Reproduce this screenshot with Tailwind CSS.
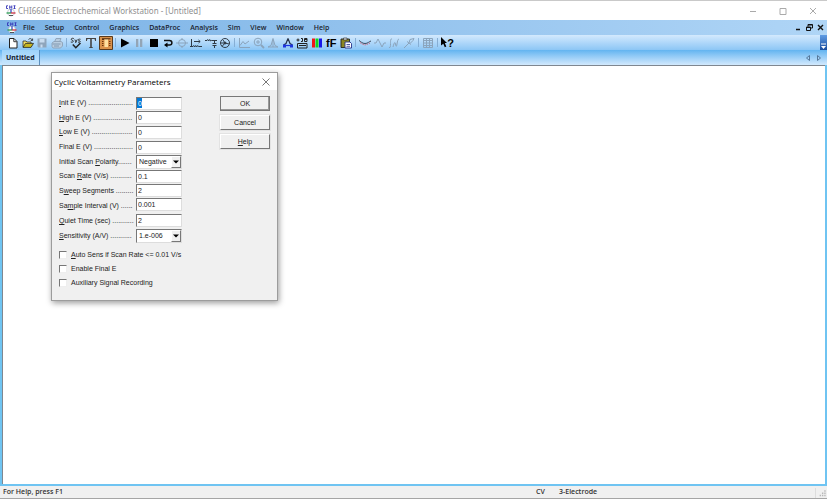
<!DOCTYPE html>
<html lang="en">
<head>
    <meta charset="UTF-8">
    <meta name="viewport" content="width=device-width, initial-scale=1.0">
    <title>CHI660E Electrochemical Workstation - [Untitled]</title>
    <script src="https://cdn.jsdelivr.net/npm/@tailwindcss/browser@4"></script>
</head>
<body class="h-screen flex flex-col overflow-hidden bg-[#f0f0f0] font-['Open_Sans','Noto_Sans',sans-serif] text-[8px] leading-[12px] text-[#1c2430]">

    <!-- Shared logo -->
    <svg class="hidden">
        <symbol id="logo" viewBox="0 0 12 12">
            <path d="M3 .8H1.500V3.500H3M4.700 .5v3.300M6.800 .5v3.300M4.700 2.100h2.100M8.500 .8h2M8.500 3.500h2M9.500 .8v2.700" stroke="#3434b8" stroke-width=".9" fill="none"/>
            <circle cx="6" cy="7.500" r="3.500" fill="#fff" stroke="#aab6c4" stroke-width=".7"/>
            <path d="M6 4v4" stroke="#2a3fc0" stroke-width="1.200"/>
            <path d="M6 8H1.500" stroke="#2a9c50" stroke-width="1.300"/>
            <path d="M6 8h4.500" stroke="#d03040" stroke-width="1.300"/>
            <path d="M4 10.500h4" stroke="#333" stroke-width=".8"/>
        </symbol>
    </svg>

    <!-- Title bar -->
    <header class="h-[20px] shrink-0 flex items-center bg-white border-t border-[#c9c9c9] pl-[5px] pr-[9px]">
        <svg class="size-[12px] shrink-0"><use href="#logo"/></svg>
        <h1 class="ml-[1px] font-['Noto_Sans',sans-serif] text-[8px] text-[#8f8f8f]">CHI660E Electrochemical Workstation - [Untitled]</h1>
        <div class="ml-auto flex gap-[20px]">
            <button aria-label="Minimize"><svg class="size-[10px]" viewBox="0 0 10 10" fill="none" stroke="#aaa"><path d="M2 5.500h6"/></svg></button>
            <button aria-label="Maximize"><svg class="size-[10px]" viewBox="0 0 10 10" fill="none" stroke="#aaa"><path d="M2 2.500h6v6H2z"/></svg></button>
            <button aria-label="Close"><svg class="size-[10px]" viewBox="0 0 10 10" fill="none" stroke="#aaa"><path d="M2 2l6 6M8 2L2 8"/></svg></button>
        </div>
    </header>

    <!-- Menu bar -->
    <nav class="h-[15px] shrink-0 flex items-center pl-[6px] pr-[2px] bg-linear-to-r from-[#7cb3e6] to-[#afd5f6]">
        <svg class="size-[12px] shrink-0 mr-[5px]"><use href="#logo"/></svg>
        <div class="flex gap-[10px] font-semibold text-[7px]">
            <button>File</button>
            <button>Setup</button>
            <button>Control</button>
            <button>Graphics</button>
            <button>DataProc</button>
            <button>Analysis</button>
            <button>Sim</button>
            <button>View</button>
            <button>Window</button>
            <button>Help</button>
        </div>
        <div class="ml-auto flex gap-[2px]">
            <button aria-label="Minimize document"><svg class="size-[9px]" viewBox="0 0 9 9"><path d="M2 6.500h4" stroke="#111" stroke-width="1.500"/></svg></button>
            <button aria-label="Restore document"><svg class="size-[9px]" viewBox="0 0 9 9" fill="none" stroke="#111"><path d="M3 3.500V1.500h4.500v3.500H6M1.500 4h4v3.500h-4zM3 2h4.500M1.500 4.500h4"/></svg></button>
            <button aria-label="Close document"><svg class="size-[9px]" viewBox="0 0 9 9" stroke="#111" stroke-width="1.400"><path d="M2 2l5 5M7 2L2 7"/></svg></button>
        </div>
    </nav>

    <!-- Toolbar -->
    <div class="h-[15px] shrink-0 flex items-stretch pl-[6px] bg-linear-to-b from-[#d3e9fd] to-[#8cc6f5]">
        <div class="grid grid-cols-4 w-[58px] place-items-center">
            <button aria-label="New"><svg class="size-[12px]" viewBox="0 0 12 12"><path d="M2.500 1.500h4.500l3 3v6.500H2.500z" fill="#fff" stroke="#222"/><path d="M6.800 1.500v3.200h3" fill="none" stroke="#222" stroke-width=".9"/></svg></button>
            <button aria-label="Open"><svg class="size-[12px]" viewBox="0 0 12 12"><path d="M1 10V4h3l1 1h4v1.500" fill="#f4e060" stroke="#333" stroke-width=".8"/><path d="M1 10.400l2.500-4h8L9 10.400z" fill="#c8b820" stroke="#222" stroke-width=".8"/><path d="M6.500 2.500c1.500-1.500 3-1 3.800.5M10.600 1.500v2H8.800" fill="none" stroke="#222" stroke-width=".8"/></svg></button>
            <button aria-label="Save"><svg class="size-[12px]" viewBox="0 0 12 12"><path d="M1.500 1.500h9v9h-8l-1-1z" fill="#8fa5bb"/><path d="M3.500 2h5v3.500h-5zM4.500 7.500h2v3h-2z" fill="#c9dcef"/></svg></button>
            <button aria-label="Print"><svg class="size-[12px]" viewBox="0 0 12 12"><path d="M3.500 5l1.500-3.500h5L8.500 5M1 6l2-1.500h7l1.500 1v3.500l-2 2H2L1 9.500z" fill="#b9cde0" stroke="#8da2b7" stroke-width=".9"/><path d="M1.500 7h8M3 9h5" stroke="#8098b0" fill="none"/></svg></button>
        </div>
        <div class="w-[5px] flex justify-center py-[3px]"><i class="w-px bg-[#86aed4]"></i></div>
        <div class="grid grid-cols-3 w-[44px] place-items-center">
            <button aria-label="System"><svg class="size-[12px]" viewBox="0 0 12 12" fill="none" stroke="#222" stroke-width=".9"><path d="M3.800 1.500C1 .5.500 3 2.300 3.300S3.500 5.800.8 5M4.800 2.500l1.200 2.500M7.200 2.500L5.500 6M10.500 2.300C8 1.600 7.500 3.300 9.300 3.700s1 2-1.300 1.400"/><path d="M2.800 7.500l3 3.200L10.500 6" stroke-width="1.500"/></svg></button>
            <button aria-label="Technique"><svg class="size-[12px]" viewBox="0 0 12 12" fill="#444"><path d="M1 1h10v3h-.8L9.500 2H6.800v8l1.200.4V11H4v-.6L5.200 10V2H2.500l-.7 2H1z"/></svg></button>
            <button aria-label="Parameters"><svg class="size-[14px]" viewBox="0 0 14 14"><path d="M.5 .5h13v13H.5z" fill="#d9914a" stroke="#5a3a1c"/><path d="M3 3.500h2M3 5.500h1.500M3 7.500h1.500M3 9.500h1.500M10 5.500h1.500M10 7.500h1.500M10 9.500h1.500" stroke="#6b350c"/><path d="M5.500 3h3.500v8H5.500z" fill="#ffe0a0"/><path d="M3 2.800h8.500" stroke="#4a270c"/></svg></button>
        </div>
        <div class="w-[5px] flex justify-center py-[3px]"><i class="w-px bg-[#86aed4]"></i></div>
        <div class="grid grid-cols-8 w-[114px] place-items-center">
            <button aria-label="Run"><svg class="size-[12px]" viewBox="0 0 12 12"><path d="M2 1.500l8.500 4.500L2 10.500z"/></svg></button>
            <button aria-label="Pause"><svg class="size-[12px]" viewBox="0 0 12 12" fill="#93a5b6"><path d="M3 2h2.300v8H3zM7 2h2.300v8H7z"/></svg></button>
            <button aria-label="Stop"><svg class="size-[12px]" viewBox="0 0 12 12"><path d="M2 2h8v8H2z"/></svg></button>
            <button aria-label="Reverse"><svg class="size-[12px]" viewBox="0 0 12 12"><path d="M2 3.500h5.500c3.200 0 3.200 4.500 0 4.500H5" fill="none" stroke="#111" stroke-width="1.500"/><path d="M2 8l3.500-2.500v5z"/></svg></button>
            <button aria-label="Zero current"><svg class="size-[12px]" viewBox="0 0 12 12" fill="none" stroke="#8ba4bc"><circle cx="6" cy="6" r="3.500"/><path d="M0 6h12M6 1v2M6 9v2"/></svg></button>
            <button aria-label="iR compensation"><svg class="size-[12px]" viewBox="0 0 12 12" fill="none" stroke="#2f3a46"><path d="M1.500 2v7M0 9.500h3l.7-1 1 1.500 1-1.500 1 1.500 1-1.500.8 1H12M4 4.500h6M8.500 3l1.700 1.500L8.500 6"/></svg></button>
            <button aria-label="Filter"><svg class="size-[12px]" viewBox="0 0 12 12" fill="none" stroke="#2f3a46"><path d="M0 3.500h2l.7-1 1 1.500 1-1.500 1 1.500.7-.5H12M9.500 3.500v3M7.500 6.500h4M7.500 8.500h4M9.500 8.500v2.500"/></svg></button>
            <button aria-label="Cell"><svg class="size-[12px]" viewBox="0 0 12 12" fill="none" stroke="#2f3a46"><circle cx="6" cy="6" r="4.500"/><path d="M6 6L4 3M6 6l4 1M6 6L3 9.500M1.500 6H5"/><circle cx="6" cy="6" r="1" fill="#2f3a46"/></svg></button>
        </div>
        <div class="w-[5px] flex justify-center py-[3px]"><i class="w-px bg-[#86aed4]"></i></div>
        <div class="grid grid-cols-8 w-[116px] place-items-center">
            <button aria-label="Present data"><svg class="size-[12px]" viewBox="0 0 12 12" fill="none" stroke="#8ba4bc"><path d="M1.500 1v9.500H12M2 8.500l3-4 2 2.500 4-3"/></svg></button>
            <button aria-label="Zoom"><svg class="size-[12px]" viewBox="0 0 12 12" fill="none" stroke="#8ba4bc"><circle cx="5" cy="5" r="3.800"/><path d="M3 5h4M5 3v4"/><path d="M8 8l3 3" stroke-width="1.800"/></svg></button>
            <button aria-label="Peak"><svg class="size-[12px]" viewBox="0 0 12 12" fill="none" stroke="#8ba4bc"><path d="M1 10l3-1.500L6 1.500l2 7L11 10M1 10h10M6 3v7"/></svg></button>
            <button aria-label="Peak definition"><svg class="size-[12px]" viewBox="0 0 12 12" fill="none" stroke="#1d35e0"><path d="M6 1.500L4 6.500 1.500 8M6 1.500L8 6.500l2.500 1.500" stroke="#26324a" stroke-width="1.200"/><path d="M3 8.500h6" stroke-width="1.200"/><path d="M1 7.500h3v3H1zM8 7.500h3v3H8z" fill="#1d35e0" stroke="none"/></svg></button>
            <button aria-label="Axis options"><svg class="size-[12px]" viewBox="0 0 12 12" fill="none" stroke="#222"><path d="M.5 3h3M2 1.500v3M5 1.500h1.500v3H5M8.500 1.500h2.500v3H8.500zM1.500 6.500h9.500V11H1.500zM3 8.500h7M8 2.500h3"/></svg></button>
            <button aria-label="Colors"><svg class="size-[12px]" viewBox="0 0 12 12"><path d="M1 1.500h3v9H1z" fill="#f01818"/><path d="M4.500 1.500h3v9h-3z" fill="#10d820"/><path d="M8 1.500h3v9H8z" fill="#1818e8"/></svg></button>
            <button aria-label="Font" class="font-['Liberation_Sans',sans-serif] font-bold text-[11px] text-black">fF</button>
            <button aria-label="Clipboard"><svg class="size-[12px]" viewBox="0 0 12 12"><path d="M1 2h8.500v8.500H1z" fill="#8c8620" stroke="#222" stroke-width=".9"/><path d="M3.500 1h3.500v2H3.500z" fill="#ddd" stroke="#222" stroke-width=".6"/><path d="M5 5h5l1.500 1.500V11H5z" fill="#fff" stroke="#26328a" stroke-width=".9"/><path d="M6.500 7.500h3.500M6.500 9.300h3.500" stroke="#26328a" stroke-width=".8"/></svg></button>
        </div>
        <div class="w-[5px] flex justify-center py-[3px]"><i class="w-px bg-[#86aed4]"></i></div>
        <div class="grid grid-cols-4 w-[58px] place-items-center">
            <button aria-label="Smoothing"><svg class="size-[12px]" viewBox="0 0 12 12" fill="none"><path d="M0 3.500c2 1 3 3 6 3s4-2 6-2.500" stroke="#3c4c60"/><path d="M1 5.500l2 1.500 3 1 3-1 2-1" stroke="#d05068" stroke-dasharray="1 1"/></svg></button>
            <button aria-label="Derivative"><svg class="size-[12px]" viewBox="0 0 12 12" fill="none" stroke="#8ba4bc"><path d="M0 6h2L4 2l4 8 2-4h2"/></svg></button>
            <button aria-label="Integration"><svg class="size-[12px]" viewBox="0 0 12 12" fill="none" stroke="#8ba4bc"><path d="M1 10.500c1.500.5 1.500-1 1.500-4s0-5 1.500-4.500M5 10c1-4 2-6 2.500-3s1 3 1.500 0 1-5 2-5"/></svg></button>
            <button aria-label="Interpolation"><svg class="size-[12px]" viewBox="0 0 12 12" fill="none" stroke="#8ba4bc"><path d="M1 11l5-5 1-3.500 4-1-1 2-3 3M4 4.500l4 3"/></svg></button>
        </div>
        <div class="w-[5px] flex justify-center py-[3px]"><i class="w-px bg-[#86aed4]"></i></div>
        <div class="grid w-[14px] place-items-center">
            <button aria-label="Data list"><svg class="size-[12px]" viewBox="0 0 12 12" fill="none" stroke="#8ba4bc"><path d="M1.500 1.500h9v9h-9zM1.500 3.500h9M1.500 6h9M1.500 8.500h9M4.500 1.500v9M7.500 1.500v9"/></svg></button>
        </div>
        <div class="w-[5px] flex justify-center py-[3px]"><i class="w-px bg-[#86aed4]"></i></div>
        <div class="grid w-[15px] place-items-center">
            <button aria-label="Context help" class="flex items-center font-['Liberation_Sans',sans-serif] font-bold text-[11px] text-black">
                <svg class="w-[6px] h-[11px]" viewBox="0 0 6 11"><path d="M0 0l6 6H3.800l1.500 3.500-1.500.7L2.300 6.800 0 8.500z"/></svg>?
            </button>
        </div>
        <button aria-label="Toolbar options" class="ml-auto w-[7px] flex items-end justify-center bg-linear-to-b from-[#5f9ce4] to-[#1a4c9e]">
            <svg class="w-[5px] h-[7px]" viewBox="0 0 5 7"><path d="M0 1h5" stroke="#fff"/><path d="M0 3h5L2.500 6z" fill="#fff"/></svg>
        </button>
    </div>

    <!-- Document tabs -->
    <div class="h-[15px] shrink-0 flex items-stretch justify-between pl-[2px] pr-[4px] bg-linear-to-b from-[#62b4f0] to-[#d2e9fd]">
        <button class="h-full px-[4px] border-r border-[#5b8fbe] bg-linear-to-b from-[#9dd3fa] to-[#c9e6fd] font-['Noto_Sans',sans-serif] font-bold text-[7px] text-[#14202e]">Untitled</button>
        <div class="flex items-center gap-[3px]">
            <button aria-label="Previous tab"><svg class="size-[8px]" viewBox="0 0 8 8" fill="none" stroke="#56789a"><path d="M5.500 1.500v5L2.500 4z"/></svg></button>
            <button aria-label="Next tab"><svg class="size-[8px]" viewBox="0 0 8 8" fill="none" stroke="#56789a"><path d="M2.500 1.500v5l3-2.500z"/></svg></button>
        </div>
    </div>

    <!-- Document area -->
    <main class="relative flex-1 min-h-0 border-x-2 border-b-2 border-[#6fc4f2] bg-white">
        <div class="h-full border-t border-l border-[#7f8790]"></div>

        <form class="absolute left-[49px] top-[7px] w-[227px] border border-[#9c9c9c] bg-[#f0f0f0] shadow-[1px_2px_6px_rgba(0,0,0,0.4)] font-['Liberation_Sans',sans-serif] text-[7px] leading-[10px] text-[#222]">
            <div class="h-[17px] flex items-center justify-between pl-[2px] pr-[6px] bg-white">
                <h2 class="font-['Open_Sans','Noto_Sans',sans-serif] text-[8px] text-black">Cyclic Voltammetry Parameters</h2>
                <button type="button" aria-label="Close dialog"><svg class="size-[10px]" viewBox="0 0 10 10" stroke="#555" stroke-width=".8"><path d="M1.500 1.500l7 7M8.500 1.500l-7 7"/></svg></button>
            </div>

            <div class="flex justify-between pl-[7px] pr-[7px] pt-[6px]">
                <div class="w-[123px]">
                    <div class="h-[102px] flex flex-col">
                        <div class="flex-1 flex items-center">
                            <label for="init" class="w-[77px] overflow-hidden whitespace-nowrap"><u>I</u>nit E (V) .......................</label>
                            <input id="init" value="0" class="w-[46px] h-[13px] px-px border border-t-[#777] border-l-[#777] border-b-[#ddd] border-r-[#ddd] bg-white bg-[linear-gradient(#0078d7,#0078d7)] bg-no-repeat bg-[length:5px_10px] text-white">
                        </div>
                        <div class="flex-1 flex items-center">
                            <label for="high" class="w-[77px] overflow-hidden whitespace-nowrap"><u>H</u>igh E (V) ....................</label>
                            <input id="high" value="0" class="w-[46px] h-[13px] px-px border border-t-[#777] border-l-[#777] border-b-[#ddd] border-r-[#ddd] bg-white">
                        </div>
                        <div class="flex-1 flex items-center">
                            <label for="low" class="w-[77px] overflow-hidden whitespace-nowrap"><u>L</u>ow E (V) .....................</label>
                            <input id="low" value="0" class="w-[46px] h-[13px] px-px border border-t-[#777] border-l-[#777] border-b-[#ddd] border-r-[#ddd] bg-white">
                        </div>
                        <div class="flex-1 flex items-center">
                            <label for="final" class="w-[77px] overflow-hidden whitespace-nowrap">Final E (V) ....................</label>
                            <input id="final" value="0" class="w-[46px] h-[13px] px-px border border-t-[#777] border-l-[#777] border-b-[#ddd] border-r-[#ddd] bg-white">
                        </div>
                        <div class="flex-1 flex items-center">
                            <label for="polarity" class="w-[77px] overflow-hidden whitespace-nowrap">Initial Scan <u>P</u>olarity.......</label>
                            <div class="relative w-[46px] h-[14px]">
                                <select id="polarity" class="block appearance-none w-full h-full pl-[2px] border border-t-[#777] border-l-[#777] border-b-[#ddd] border-r-[#ddd] bg-white"><option>Negative</option><option>Positive</option></select>
                                <svg class="absolute right-[1px] top-[1px] w-[10px] h-[12px] bg-[#f0f0f0] border border-[#fff] border-r-[#777] border-b-[#777] pointer-events-none" viewBox="0 0 8 10"><path d="M1 3.500h6L4 6.500z"/></svg>
                            </div>
                        </div>
                        <div class="flex-1 flex items-center">
                            <label for="rate" class="w-[77px] overflow-hidden whitespace-nowrap">Scan <u>R</u>ate (V/s) ...........</label>
                            <input id="rate" value="0.1" class="w-[46px] h-[13px] px-px border border-t-[#777] border-l-[#777] border-b-[#ddd] border-r-[#ddd] bg-white">
                        </div>
                        <div class="flex-1 flex items-center">
                            <label for="sweep" class="w-[77px] overflow-hidden whitespace-nowrap">S<u>w</u>eep Segments .........</label>
                            <input id="sweep" value="2" class="w-[46px] h-[13px] px-px border border-t-[#777] border-l-[#777] border-b-[#ddd] border-r-[#ddd] bg-white">
                        </div>
                    </div>
                    <div class="h-[46px] flex flex-col">
                        <div class="flex-1 flex items-start">
                            <label for="interval" class="w-[77px] pt-[3px] overflow-hidden whitespace-nowrap">Sa<u>m</u>ple Interval (V) ......</label>
                            <input id="interval" value="0.001" class="w-[46px] h-[13px] px-px border border-t-[#777] border-l-[#777] border-b-[#ddd] border-r-[#ddd] bg-white">
                        </div>
                        <div class="flex-1 flex items-center">
                            <label for="quiet" class="w-[77px] overflow-hidden whitespace-nowrap"><u>Q</u>uiet Time (sec) ...........</label>
                            <input id="quiet" value="2" class="w-[46px] h-[13px] px-px border border-t-[#777] border-l-[#777] border-b-[#ddd] border-r-[#ddd] bg-white">
                        </div>
                        <div class="flex-1 flex items-center">
                            <label for="sens" class="w-[77px] overflow-hidden whitespace-nowrap"><u>S</u>ensitivity (A/V) ...........</label>
                            <div class="relative w-[46px] h-[14px]">
                                <select id="sens" class="block appearance-none w-full h-full pl-[2px] border border-t-[#777] border-l-[#777] border-b-[#ddd] border-r-[#ddd] bg-white"><option>1.e-006</option><option>1.e-005</option></select>
                                <svg class="absolute right-[1px] top-[1px] w-[10px] h-[12px] bg-[#f0f0f0] border border-[#fff] border-r-[#777] border-b-[#777] pointer-events-none" viewBox="0 0 8 10"><path d="M1 3.500h6L4 6.500z"/></svg>
                            </div>
                        </div>
                    </div>
                </div>

                <div class="flex flex-col gap-[4px]">
                    <button class="w-[50px] h-[15px] border border-[#777] bg-[#f0f0f0] shadow-[inset_-1px_-1px_0_#999]">OK</button>
                    <button type="button" class="w-[50px] h-[15px] border border-white border-r-[#777] border-b-[#777] bg-[#f0f0f0] shadow-[0_0_0_1px_#e3e3e3]">Cancel</button>
                    <button type="button" class="w-[50px] h-[15px] border border-white border-r-[#777] border-b-[#777] bg-[#f0f0f0] shadow-[0_0_0_1px_#e3e3e3]"><u>H</u>elp</button>
                </div>
            </div>

            <div class="flex flex-col gap-[4px] pl-[7px] pt-[6px] pb-[12px]">
                <label class="flex items-center gap-[4px]"><input type="checkbox" class="appearance-none size-[8px] border border-t-[#777] border-l-[#777] border-b-[#eee] border-r-[#eee] bg-white"><span><u>A</u>uto Sens if Scan Rate &lt;= 0.01 V/s</span></label>
                <label class="flex items-center gap-[4px]"><input type="checkbox" class="appearance-none size-[8px] border border-t-[#777] border-l-[#777] border-b-[#eee] border-r-[#eee] bg-white"><span>Enable Final E</span></label>
                <label class="flex items-center gap-[4px]"><input type="checkbox" class="appearance-none size-[8px] border border-t-[#777] border-l-[#777] border-b-[#eee] border-r-[#eee] bg-white"><span>Auxiliary Signal Recording</span></label>
            </div>
        </form>
    </main>

    <!-- Status bar -->
    <footer class="h-[13px] shrink-0 flex items-end pl-[3px] border-b border-[#a5a5a5] bg-[#f0f0f0] font-semibold text-[7px] text-[#333]">
        <span class="flex-1">For Help, press F1</span>
        <span class="w-[23px]">CV</span>
        <span class="w-[256px]">3-Electrode</span>
        <svg class="w-[12px] h-[10px] border-l border-[#ddd]" viewBox="0 0 12 10" fill="#b8b8b8"><path d="M9 2h1.500v1.500H9zM9 4.500h1.500V6H9zM6.500 4.500H8V6H6.500zM9 7h1.500v1.500H9zM6.500 7H8v1.500H6.500zM4 7h1.500v1.500H4z"/></svg>
    </footer>

</body>
</html>
